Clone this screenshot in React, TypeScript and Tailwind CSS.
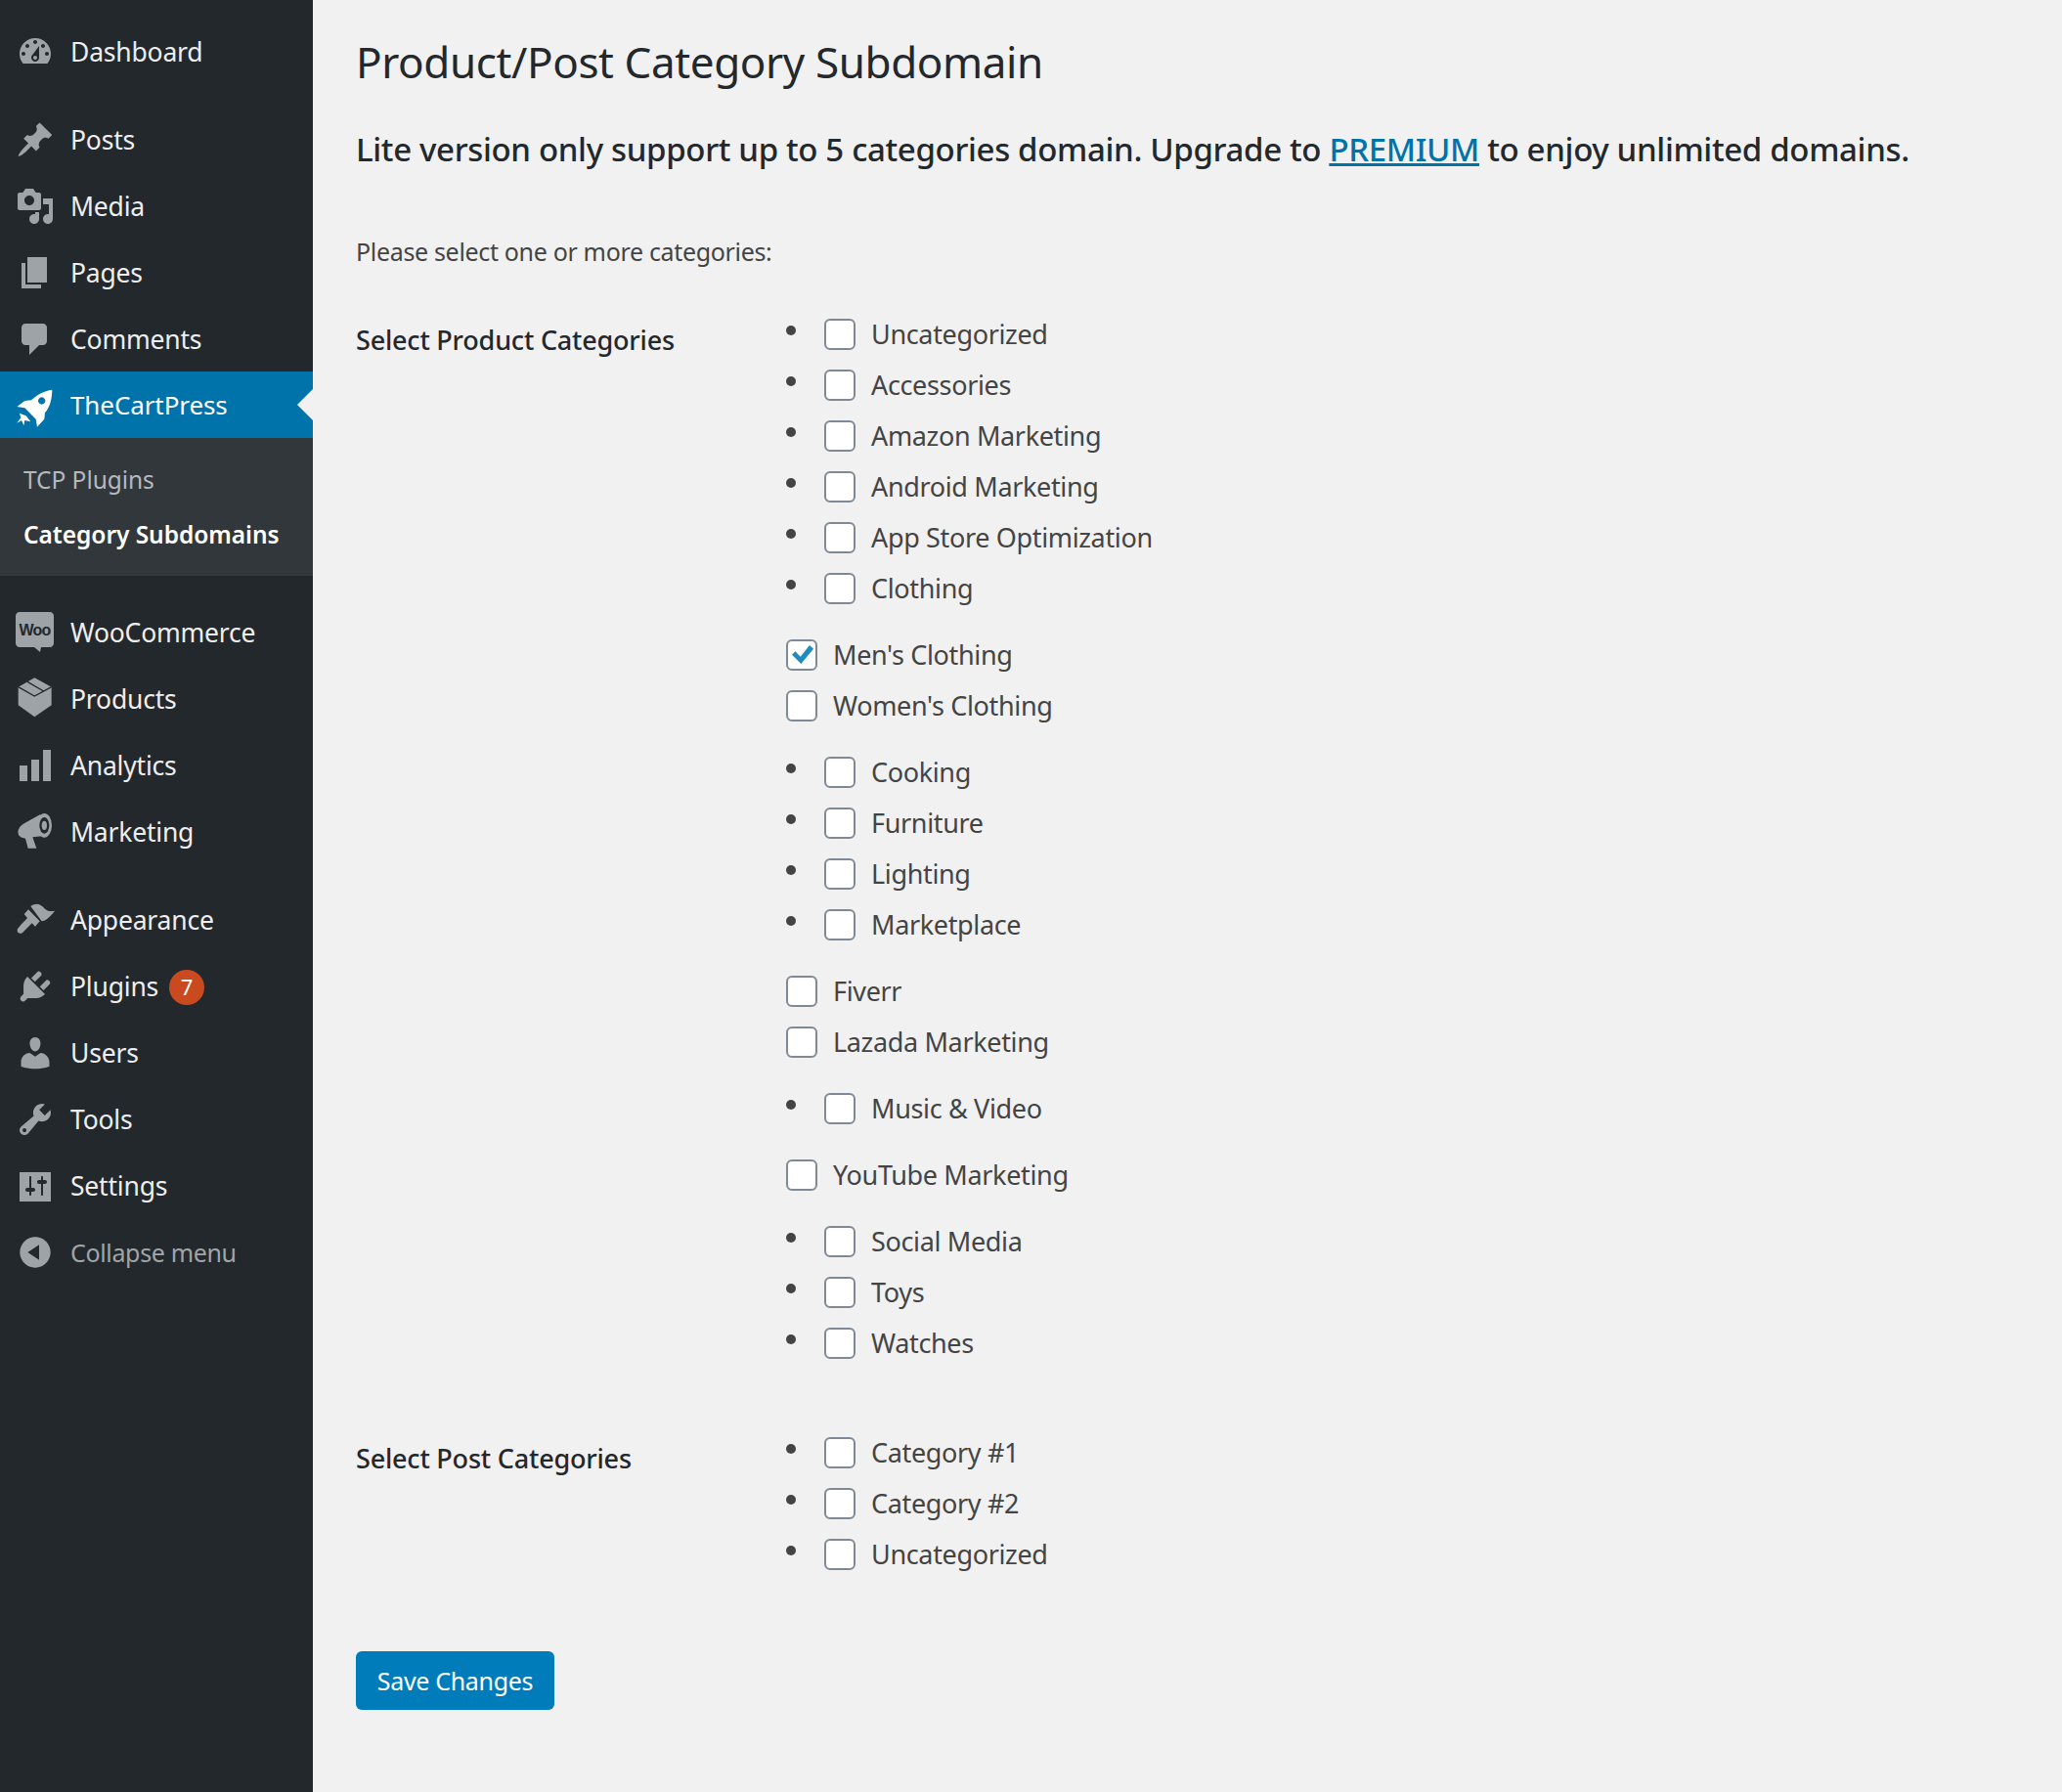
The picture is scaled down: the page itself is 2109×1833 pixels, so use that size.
import React from "react";

const P: Record<string, string> = {
  dashboard: "M3.76 16h12.48c1.1-1.37 1.76-3.11 1.76-5 0-4.42-3.58-8-8-8s-8 3.58-8 8c0 1.89.66 3.63 1.76 5zM10 4c.55 0 1 .45 1 1s-.45 1-1 1-1-.45-1-1 .45-1 1-1zM6 6c.55 0 1 .45 1 1s-.45 1-1 1-1-.45-1-1 .45-1 1-1zm8 0c.55 0 1 .45 1 1s-.45 1-1 1-1-.45-1-1 .45-1 1-1zm-5.37 5.55L12 7v6c0 1.1-.9 2-2 2s-2-.9-2-2c0-.57.24-1.08.63-1.45zM4 10c.55 0 1 .45 1 1s-.45 1-1 1-1-.45-1-1 .45-1 1-1zm12 0c.55 0 1 .45 1 1s-.45 1-1 1-1-.45-1-1 .45-1 1-1zm-5 3c0-.55-.45-1-1-1s-1 .45-1 1 .45 1 1 1 1-.45 1-1z",
  posts: "M10.44 3.02l1.82-1.82 6.36 6.35-1.83 1.82c-1.05-.68-2.48-.57-3.41.36l-.75.75c-.92.93-1.04 2.35-.35 3.41l-1.83 1.82-2.41-2.41-2.8 2.79c-.42.42-3.38 2.71-3.8 2.29s1.86-3.39 2.28-3.81l2.79-2.79L4.1 9.36l1.83-1.82c1.05.69 2.48.57 3.4-.36l.75-.75c.93-.92 1.05-2.35.36-3.41z",
  media: "M13 11V4c0-.55-.45-1-1-1h-1.67L9 1H5L3.67 3H2c-.55 0-1 .45-1 1v7c0 .55.45 1 1 1h10c.55 0 1-.45 1-1zM7 4.5c1.38 0 2.5 1.12 2.5 2.5S8.38 9.5 7 9.5 4.5 8.38 4.5 7 5.62 4.5 7 4.5zM14 6h5v10.5c0 1.38-1.12 2.5-2.5 2.5S14 17.88 14 16.5s1.12-2.5 2.5-2.5c.17 0 .34.02.5.05V9h-3V6zm-4 8.05V13h2v3.5c0 1.38-1.12 2.5-2.5 2.5S7 17.88 7 16.5 8.12 14 9.5 14c.17 0 .34.02.5.05z",
  pages: "M6 15V2h10v13H6zm-1 1h8v2H3V5h2v11z",
  comments: "M5 2h9c1.1 0 2 .9 2 2v7c0 1.1-.9 2-2 2h-2l-5 5v-5H5c-1.1 0-2-.9-2-2V4c0-1.1.9-2 2-2z",
  analytics: "M18 18V2h-4v16h4zm-6 0V7H8v11h4zm-6 0v-8H2v8h4z",
  plugins: "M13.11 4.36L9.87 7.6 8 5.73l3.24-3.24c.35-.34 1.05-.2 1.56.32.52.51.66 1.21.31 1.55zm-8 1.77l.91-1.12 9.01 9.01-1.19.84c-.71.71-2.63 1.16-3.82 1.16H6.14L4.9 17.26c-.59.59-1.54.59-2.12 0-.59-.58-.59-1.53 0-2.12l1.24-1.24v-3.88c0-1.13.4-3.19 1.09-3.89zm7.26 3.97l3.24-3.24c.34-.35 1.04-.21 1.55.31.52.51.66 1.21.31 1.55l-3.24 3.25z",
  users: "M10 9.25c-2.27 0-2.73-3.44-2.73-3.44C7 4.02 7.82 2 9.97 2c2.16 0 2.98 2.02 2.71 3.81 0 0-.41 3.44-2.68 3.44zm0 2.57L12.72 10c2.39 0 4.52 2.33 4.52 4.53v2.49s-3.65 1.13-7.24 1.13c-3.65 0-7.24-1.13-7.24-1.13v-2.49c0-2.25 1.94-4.48 4.47-4.48z",
  tools: "M16.68 9.77c-1.34 1.34-3.3 1.67-4.95.99l-5.41 6.52c-.99.99-2.59.99-3.58 0s-.99-2.59 0-3.57l6.52-5.42c-.68-1.65-.35-3.61.99-4.95 1.28-1.28 3.12-1.62 4.72-1.06l-2.89 2.89 2.82 2.82 2.86-2.87c.53 1.58.18 3.39-1.08 4.65zM3.81 16.21c.4.39 1.04.39 1.43 0 .4-.4.4-1.04 0-1.43-.39-.4-1.03-.4-1.43 0-.39.39-.39 1.03 0 1.43z",
  settings: "M18 18V3H2v15h16zM8 11h1c.55 0 1 .45 1 1s-.45 1-1 1H8v1.500c0 .28-.22.5-.5.5s-.5-.22-.5-.5V13H6c-.55 0-1-.45-1-1s.45-1 1-1h1V5.500c0-.28.22-.5.5-.5s.5.22.5.5V11zm5-2h-1c-.55 0-1-.45-1-1s.45-1 1-1h1V5.500c0-.28.22-.5.5-.5s.5.22.5.5V7h1c.55 0 1 .45 1 1s-.45 1-1 1h-1v5.500c0 .28-.22.5-.5.5s-.5-.22-.5-.5V9z",
  collapse: "M10 2.160c4.330 0 7.840 3.510 7.840 7.840s-3.510 7.840-7.840 7.840S2.160 14.330 2.160 10 5.710 2.160 10 2.160zm2 11.720V6.120L6.180 9.970z",
};

const G = "#9ea3a8";
const D = "#23282d";

function DI({ name }: { name: string }) {
  return (
    <svg viewBox="0 0 20 20" className="h-10 w-10 shrink-0" fill={G} fillRule="evenodd">
      <path d={P[name]} />
    </svg>
  );
}

function Rocket() {
  return (
    <svg viewBox="0 -12 168 168" className="h-14 w-14 shrink-0" fill="#ffffff" fillRule="evenodd">
      <path d="M136 26C110 30 88 42 72 58L52 60 28 78 52 82 86 116 90 140 112 116 114 96C130 80 136 50 136 26ZM104 49a11 11 0 1 0 .01 0Z" />
      <path d="M36 98L56 106 70 124 52 120 49 136 42 120 28 128 40 112Z" />
    </svg>
  );
}

function WooIcon() {
  return (
    <svg viewBox="0 0 40 42" className="h-[42px] w-10 shrink-0 overflow-visible">
      <path d="M4 0h31c2.200 0 4 1.800 4 4v28c0 2.200-1.800 4-4 4H26l-1 5-6-5H4c-2.200 0-4-1.800-4-4V4c0-2.200 1.800-4 4-4z" fill={G} />
      <text x="19.500" y="23.500" textAnchor="middle" fontSize="16" fontWeight="600" fill={D} fontFamily="'Liberation Sans', sans-serif" letterSpacing="-0.8">Woo</text>
    </svg>
  );
}

function BoxIcon() {
  return (
    <svg viewBox="0 201 168 168" className="h-14 w-14 shrink-0">
      <path d="M82 220L134 248V304L82 340 32 304V248Z" fill={G} />
      <path d="M32 248L82 276 134 248M60 232L110 261" fill="none" stroke={D} strokeWidth="4" />
    </svg>
  );
}

function MegaphoneIcon() {
  return (
    <svg viewBox="0 -6 168 168" className="h-14 w-14 shrink-0" fill={G}>
      <path d="M34 68C38 60 44 56 50 52L100 24 112 90 76 94 88 128H62L54 98 46 96C32 92 28 78 34 68Z" />
      <ellipse cx="112" cy="58" rx="23" ry="37" />
      <ellipse cx="112" cy="58" rx="15" ry="25" fill={D} />
      <ellipse cx="112" cy="58" rx="8" ry="14" />
    </svg>
  );
}

function BrushIcon() {
  return (
    <svg viewBox="0 264 168 168" className="h-14 w-14 shrink-0" fill={G}>
      <path d="M50 330L63 316 98 352 84 368 74 358 46 386C40 392 30 390 29 382 28 374 36 368 60 342Z" />
      <path d="M70 306C88 294 100 300 114 314 122 322 132 322 144 320 132 336 118 350 104 352Z" />
    </svg>
  );
}

function Item({ icon, label, muted }: { icon: React.ReactNode; label: React.ReactNode; muted?: boolean }) {
  return (
    <div className={`flex h-[68px] items-center pl-4 ${muted ? "text-[#a0a5aa]" : "text-[#eeeeee]"}`}>
      <div className="flex w-10 justify-center">{icon}</div>
      <div className={`ml-[16px] flex items-center pt-px ${muted ? "text-[25px] tracking-[-0.35px]" : "text-[26.5px] tracking-[-0.2px]"}`}>{label}</div>
    </div>
  );
}

function Sidebar() {
  return (
    <aside className="w-[320px] shrink-0 bg-[#23282d] pt-[19px]">
      <Item icon={<DI name="dashboard" />} label="Dashboard" />
      <div className="mt-[22px]">
        <Item icon={<DI name="posts" />} label="Posts" />
        <Item icon={<DI name="media" />} label="Media" />
        <Item icon={<DI name="pages" />} label="Pages" />
        <Item icon={<DI name="comments" />} label="Comments" />
      </div>
      <div className="relative -mt-px flex h-[68px] items-center bg-[#0073aa] pl-4 text-white">
        <div className="flex w-10 justify-center">
          <Rocket />
        </div>
        <div className="ml-[16px] text-[26px] tracking-[-0.1px]">TheCartPress</div>
        <div className="absolute right-0 top-[18px] h-0 w-0 border-y-[16px] border-r-[16px] border-y-transparent border-r-[#f1f1f1]" />
      </div>
      <div className="h-[141px] bg-[#32373c] pl-[24px] pt-[15px] text-[24.5px] tracking-[-0.05px]">
        <div className="flex h-[56px] items-center text-[#b4b9be]">TCP Plugins</div>
        <div className="flex h-[56px] items-center font-semibold text-white">Category Subdomains</div>
      </div>
      <div className="mt-[24px]">
        <Item icon={<WooIcon />} label="WooCommerce" />
        <Item icon={<BoxIcon />} label="Products" />
        <Item icon={<DI name="analytics" />} label="Analytics" />
        <Item icon={<MegaphoneIcon />} label="Marketing" />
      </div>
      <div className="mt-[22px]">
        <Item icon={<BrushIcon />} label="Appearance" />
        <Item
          icon={<DI name="plugins" />}
          label={
            <>
              Plugins
              <span className="ml-[11px] flex h-9 w-9 items-center justify-center rounded-full bg-[#ca4a1f] text-[22px] text-white">7</span>
            </>
          }
        />
        <Item icon={<DI name="users" />} label="Users" />
        <Item icon={<DI name="tools" />} label="Tools" />
        <Item icon={<DI name="settings" />} label="Settings" />
        <Item icon={<DI name="collapse" />} label="Collapse menu" muted />
      </div>
    </aside>
  );
}

function Check({ label, checked, bullet }: { label: string; checked?: boolean; bullet?: boolean }) {
  return (
    <div className="flex h-[52px] items-center">
      {bullet && <span className="mb-2 mr-[29px] h-2.5 w-2.5 rounded-full bg-[#444444]" />}
      <span className="flex h-8 w-8 shrink-0 items-center justify-center rounded-md border-2 border-[#7e8993] bg-white">
        {checked && (
          <svg viewBox="0 0 32 32" className="h-8 w-8 shrink-0" fill="#1e8cbe">
            <path d="M6 15.700L9.300 12.300 14.700 17.700 24 6 28 9.700 15.300 25Z" />
          </svg>
        )}
      </span>
      <span className="ml-[16px] text-[27px] tracking-[-0.35px] text-[#444444]">{label}</span>
    </div>
  );
}

const groups: { bullet: boolean; items: string[] }[] = [
  { bullet: true, items: ["Uncategorized", "Accessories", "Amazon Marketing", "Android Marketing", "App Store Optimization", "Clothing"] },
  { bullet: false, items: ["Men's Clothing", "Women's Clothing"] },
  { bullet: true, items: ["Cooking", "Furniture", "Lighting", "Marketplace"] },
  { bullet: false, items: ["Fiverr", "Lazada Marketing"] },
  { bullet: true, items: ["Music & Video"] },
  { bullet: false, items: ["YouTube Marketing"] },
  { bullet: true, items: ["Social Media", "Toys", "Watches"] },
];

function Section({ title, children, className }: { title: string; children: React.ReactNode; className?: string }) {
  return (
    <section className={`flex ${className ?? ""}`}>
      <div className="mt-1.5 flex h-[52px] w-[440px] items-center text-[27px] font-medium tracking-[-0.2px] text-[#23282d]">{title}</div>
      <div>{children}</div>
    </section>
  );
}

export default function App() {
  return (
    <div className="flex h-[1833px] w-[2109px] overflow-hidden bg-[#f1f1f1] font-['Noto_Sans',sans-serif]">
      <Sidebar />
      <main className="pl-[44px] pt-[33px]">
        <h1 className="flex h-[60px] items-center text-[44px] tracking-[-0.4px] text-[#23282d]">Product/Post Category Subdomain</h1>
        <h2 className="mt-[35px] flex h-[50px] items-center whitespace-pre text-[33px] font-medium tracking-[-0.34px] text-[#23282d]">
          Lite version only support up to 5 categories domain. Upgrade to <a className="text-[#0073aa] underline">PREMIUM</a> to enjoy unlimited domains.
        </h2>
        <p className="mt-[62px] flex h-9 items-center text-[25px] tracking-[-0.33px] text-[#444444]">Please select one or more categories:</p>
        <Section title="Select Product Categories" className="mt-10">
          <div className="flex flex-col gap-4">
            {groups.map((g, i) => (
              <div key={i}>
                {g.items.map((t) => (
                  <Check key={t} label={t} bullet={g.bullet} checked={t === "Men's Clothing"} />
                ))}
              </div>
            ))}
          </div>
        </Section>
        <Section title="Select Post Categories" className="mt-[60px]">
          {["Category #1", "Category #2", "Uncategorized"].map((t) => (
            <Check key={t} label={t} bullet />
          ))}
        </Section>
        <button className="mt-[73px] flex h-[60px] w-[203px] items-center justify-center rounded-md bg-[#007cba] pt-px text-[25px] tracking-[-0.33px] text-white">Save Changes</button>
      </main>
    </div>
  );
}
